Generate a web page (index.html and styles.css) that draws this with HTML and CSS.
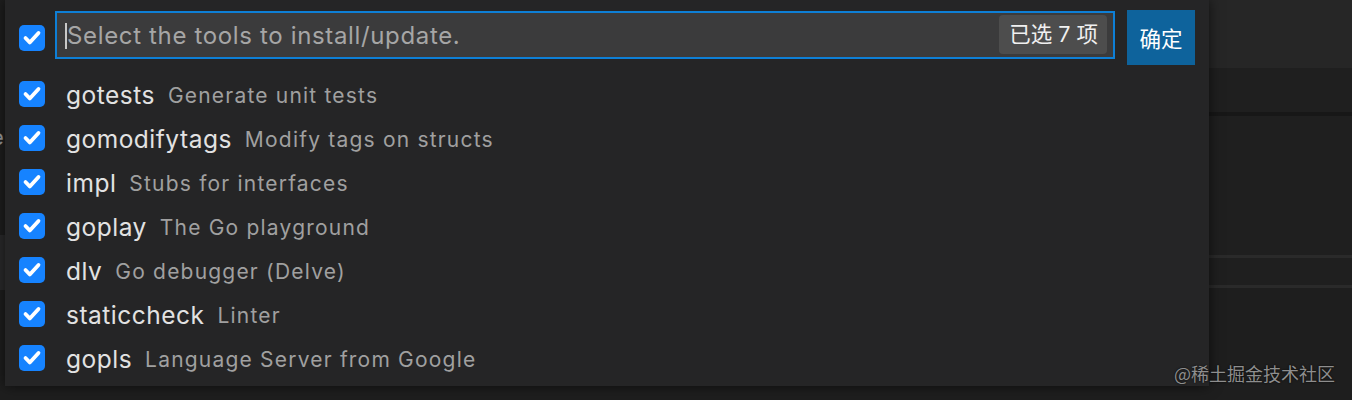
FILE: index.html
```html
<!DOCTYPE html>
<html lang="zh-CN">
<head>
<meta charset="utf-8">
<title>Go tools</title>
<link rel="stylesheet" href="styles.css">
</head>
<body>
<div class="editor">
  <div class="left-strip"><span class="ghost">e</span><div class="left-block"></div></div>
  <div class="right-area">
    <div class="ra-top"></div>
    <div class="ra-tabs"></div>
    <div class="ra-dark-line"></div>
    <div class="ra-body"></div>
    <div class="ra-light-line"></div>
    <div class="ra-row"></div>
    <div class="ra-light-line"></div>
    <div class="ra-rest"></div>
  </div>
</div>

<div class="quickpick">
  <div class="qp-header">
    <span class="check check-all"><svg viewBox="0 0 26 26"><path d="M6.5 13 L10.8 17.5 L19.5 8"/></svg></span>
    <div class="qp-input">
      <span class="caret"></span><span class="placeholder">Select the tools to install/update.</span>
      <span class="count">已选 7 项</span>
    </div>
    <button class="ok">确定</button>
  </div>
  <ul class="qp-list">
    <li><span class="check"><svg viewBox="0 0 26 26"><path d="M6.5 13 L10.8 17.5 L19.5 8"/></svg></span><span class="label">gotests</span><span class="desc">Generate unit tests</span></li>
    <li><span class="check"><svg viewBox="0 0 26 26"><path d="M6.5 13 L10.8 17.5 L19.5 8"/></svg></span><span class="label">gomodifytags</span><span class="desc">Modify tags on structs</span></li>
    <li><span class="check"><svg viewBox="0 0 26 26"><path d="M6.5 13 L10.8 17.5 L19.5 8"/></svg></span><span class="label">impl</span><span class="desc">Stubs for interfaces</span></li>
    <li><span class="check"><svg viewBox="0 0 26 26"><path d="M6.5 13 L10.8 17.5 L19.5 8"/></svg></span><span class="label">goplay</span><span class="desc">The Go playground</span></li>
    <li><span class="check"><svg viewBox="0 0 26 26"><path d="M6.5 13 L10.8 17.5 L19.5 8"/></svg></span><span class="label">dlv</span><span class="desc">Go debugger (Delve)</span></li>
    <li><span class="check"><svg viewBox="0 0 26 26"><path d="M6.5 13 L10.8 17.5 L19.5 8"/></svg></span><span class="label">staticcheck</span><span class="desc">Linter</span></li>
    <li><span class="check"><svg viewBox="0 0 26 26"><path d="M6.5 13 L10.8 17.5 L19.5 8"/></svg></span><span class="label">gopls</span><span class="desc">Language Server from Google</span></li>
  </ul>
</div>

<div class="watermark">@稀土掘金技术社区</div>
</body>
</html>
```

FILE: styles.css
```css
* { box-sizing: border-box; }
html, body {
  margin: 0;
  padding: 0;
  width: 1352px;
  height: 400px;
  overflow: hidden;
  background: #1e1e1e;
  font-family: Inter, "Noto Sans", "Noto Sans CJK SC", sans-serif;
}

/* underlying editor */
.editor {
  display: flex;
  width: 1352px;
  height: 400px;
}
.left-strip {
  width: 5px;
  position: relative;
  background: #1e1e1e;
}
.ghost {
  position: absolute;
  left: -9px;
  top: 124px;
  font-size: 22px;
  color: #9a9a9a;
}
.left-block {
  position: absolute;
  left: 0;
  top: 235px;
  width: 5px;
  height: 55px;
  background: #2a2a2b;
}
.right-area {
  flex: 1;
  display: flex;
  flex-direction: column;
}
.ra-top { height: 68px; background: #262626; }
.ra-tabs { height: 44px; background: #1f1f1f; }
.ra-dark-line { height: 4px; background: #171717; }
.ra-body { height: 139px; background: #1f1f1f; }
.ra-light-line { height: 3px; background: #2a2a2a; }
.ra-row { height: 27px; background: #1f1f1f; }
.ra-rest { flex: 1; background: #1e1e1e; }

/* quick pick overlay */
.quickpick {
  position: absolute;
  left: 5px;
  top: 0;
  width: 1204px;
  height: 386px;
  background: #252526;
  box-shadow: 0 0 12px rgba(0,0,0,0.6);
}
.qp-header {
  display: flex;
  align-items: flex-start;
  padding: 10px 14px 0 14px;
}
.check {
  flex: none;
  width: 26px;
  height: 26px;
  border-radius: 5px;
  background: #1683ff;
  display: flex;
}
.check svg {
  width: 26px;
  height: 26px;
  fill: none;
  stroke: #ffffff;
  stroke-width: 3.8;
  stroke-linecap: round;
  stroke-linejoin: round;
}
.check-all { margin-top: 15px; }
.qp-input {
  margin-left: 10px;
  margin-top: 1px;
  width: 1060px;
  height: 48px;
  border: 2px solid #0e7fd6;
  background: #3b3b3c;
  display: flex;
  align-items: center;
  padding: 0 6px 0 8px;
}
.caret {
  width: 2px;
  height: 26px;
  background: #c8c8c8;
  margin-top: 1px;
}
.placeholder {
  flex: 1;
  font-size: 24px;
  letter-spacing: 0.65px;
  color: #a6a6a6;
  margin-top: 1px;
}
.count {
  background: #4d4d4d;
  color: #f0f0f0;
  font-size: 21.5px;
  border-radius: 4px;
  height: 39px;
  line-height: 39px;
  padding: 0 9px 0 10px;
  margin-bottom: 2px;
}
.ok {
  margin-left: 12px;
  width: 68px;
  height: 55px;
  border: none;
  background: #0e639c;
  color: #ffffff;
  font-family: inherit;
  font-size: 21.5px;
  padding: 0;
}
.qp-list {
  list-style: none;
  margin: 0;
  padding: 7px 0 0 14px;
}
.qp-list li {
  display: flex;
  align-items: center;
  height: 44px;
}
.label {
  margin-left: 21px;
  font-size: 24.5px;
  letter-spacing: 0.5px;
  color: #e2e2e2;
  margin-top: 2px;
}
.desc {
  margin-left: 13px;
  font-size: 21px;
  letter-spacing: 1.2px;
  color: #a0a0a0;
  margin-top: 3px;
}

.watermark {
  position: absolute;
  right: 17px;
  top: 360px;
  font-size: 18px;
  color: #8e8e8e;
  text-shadow: 0 0 2px #000;
  font-family: "Noto Sans CJK SC", sans-serif;
}
```
